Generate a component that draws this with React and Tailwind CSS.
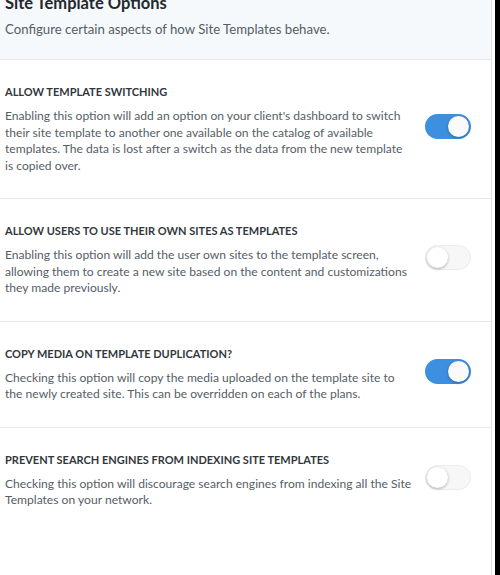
import React, { useState } from 'react';

const options = [
  {
    key: 'switching',
    title: 'Allow Template Switching',
    desc: "Enabling this option will add an option on your client's dashboard to switch their site template to another one available on the catalog of available templates. The data is lost after a switch as the data from the new template is copied over.",
    on: true,
  },
  {
    key: 'own-sites',
    title: 'Allow Users to use their own Sites as templates',
    desc: 'Enabling this option will add the user own sites to the template screen, allowing them to create a new site based on the content and customizations they made previously.',
    on: false,
  },
  {
    key: 'copy-media',
    title: 'Copy Media on Template Duplication?',
    desc: 'Checking this option will copy the media uploaded on the template site to the newly created site. This can be overridden on each of the plans.',
    on: true,
  },
  {
    key: 'no-index',
    title: 'Prevent Search Engines from indexing Site Templates',
    desc: 'Checking this option will discourage search engines from indexing all the Site Templates on your network.',
    on: false,
  },
];

const Toggle = ({ checked, onChange }) => (
  <button
    type="button"
    onClick={onChange}
    className={
      checked
        ? 'relative h-[25px] w-[46px] shrink-0 rounded-full bg-[#3d8fe0]'
        : 'relative h-[25px] w-[46px] shrink-0 rounded-full border border-[#ececec] bg-[#f7f7f7]'
    }
  >
    <span
      className={
        checked
          ? 'absolute right-[2px] top-[2px] h-[21px] w-[21px] rounded-full bg-[#fafafa] shadow-[0_1px_3px_rgba(0,0,0,0.3)]'
          : 'absolute left-[1px] top-[1px] h-[21px] w-[21px] rounded-full bg-white shadow-[0_1px_3px_rgba(0,0,0,0.3)]'
      }
    />
  </button>
);

const App = () => {
  const [values, setValues] = useState(
    Object.fromEntries(options.map((o) => [o.key, o.on]))
  );

  return (
    <div className="flex h-[575px] overflow-hidden bg-white" style={{ fontFamily: 'Lato, "Noto Sans", sans-serif' }}>
      <div className="w-[492px] border-r border-[#dfe3e8]">
        <div className="border-b border-[#e5e9ee] bg-[#f6f9fc] px-[5px] pb-[21px]">
          <h2 className="-mt-[9px] text-[16.5px] font-bold leading-[24px] text-[#23282d]">Site Template Options</h2>
          <p className="mt-[6px] text-[13.2px] leading-[17px] text-[#555d66]">
            Configure certain aspects of how Site Templates behave.
          </p>
        </div>
        {options.map((o) => (
          <div key={o.key} className="flex items-center border-b border-[#e5e9ee] py-[24px] pl-[5px] pr-[20px] last:border-b-0">
            <div className="w-[408.5px]">
              <h3 className="text-[11px] font-bold uppercase leading-[16px] text-[#32373c]">{o.title}</h3>
              <p className="mt-[8px] text-[12.1px] leading-[16.5px] text-[#555d66]">{o.desc}</p>
            </div>
            <div className="ml-[11.5px]">
              <Toggle
                checked={values[o.key]}
                onChange={() => setValues({ ...values, [o.key]: !values[o.key] })}
              />
            </div>
          </div>
        ))}
      </div>
      <div className="w-[3px] bg-white" />
      <div className="flex-1 bg-black" />
    </div>
  );
};

export default App;
